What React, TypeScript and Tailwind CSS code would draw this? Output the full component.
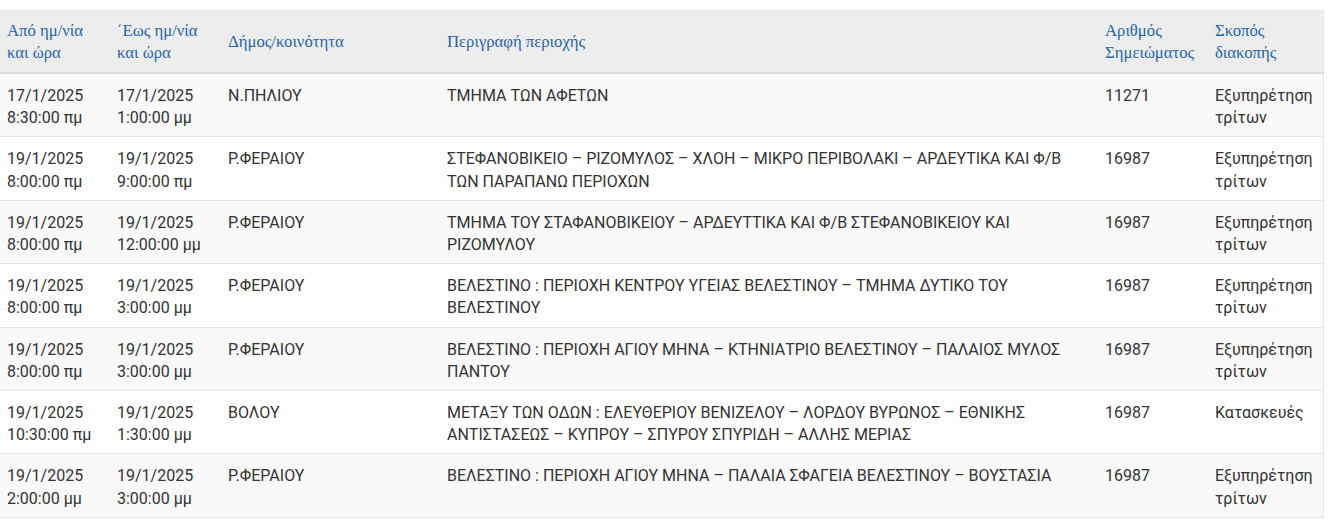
import React from "react";

type Row = [string, string, string, string, string, string, string, string];

const rows: Row[] = [
  ["17/1/2025", "8:30:00 πμ", "17/1/2025", "1:00:00 μμ", "Ν.ΠΗΛΙΟΥ", "ΤΜΗΜΑ ΤΩΝ ΑΦΕΤΩΝ", "11271", "Εξυπηρέτηση τρίτων"],
  ["19/1/2025", "8:00:00 πμ", "19/1/2025", "9:00:00 πμ", "Ρ.ΦΕΡΑΙΟΥ", "ΣΤΕΦΑΝΟΒΙΚΕΙΟ – ΡΙΖΟΜΥΛΟΣ – ΧΛΟΗ – ΜΙΚΡΟ ΠΕΡΙΒΟΛΑΚΙ – ΑΡΔΕΥΤΙΚΑ ΚΑΙ Φ/Β ΤΩΝ ΠΑΡΑΠΑΝΩ ΠΕΡΙΟΧΩΝ", "16987", "Εξυπηρέτηση τρίτων"],
  ["19/1/2025", "8:00:00 πμ", "19/1/2025", "12:00:00 μμ", "Ρ.ΦΕΡΑΙΟΥ", "ΤΜΗΜΑ ΤΟΥ ΣΤΑΦΑΝΟΒΙΚΕΙΟΥ – ΑΡΔΕΥΤΤΙΚΑ ΚΑΙ Φ/Β ΣΤΕΦΑΝΟΒΙΚΕΙΟΥ ΚΑΙ ΡΙΖΟΜΥΛΟΥ", "16987", "Εξυπηρέτηση τρίτων"],
  ["19/1/2025", "8:00:00 πμ", "19/1/2025", "3:00:00 μμ", "Ρ.ΦΕΡΑΙΟΥ", "ΒΕΛΕΣΤΙΝΟ : ΠΕΡΙΟΧΗ ΚΕΝΤΡΟΥ ΥΓΕΙΑΣ ΒΕΛΕΣΤΙΝΟΥ – ΤΜΗΜΑ ΔΥΤΙΚΟ ΤΟΥ ΒΕΛΕΣΤΙΝΟΥ", "16987", "Εξυπηρέτηση τρίτων"],
  ["19/1/2025", "8:00:00 πμ", "19/1/2025", "3:00:00 μμ", "Ρ.ΦΕΡΑΙΟΥ", "ΒΕΛΕΣΤΙΝΟ : ΠΕΡΙΟΧΗ ΑΓΙΟΥ ΜΗΝΑ – ΚΤΗΝΙΑΤΡΙΟ ΒΕΛΕΣΤΙΝΟΥ – ΠΑΛΑΙΟΣ ΜΥΛΟΣ ΠΑΝΤΟΥ", "16987", "Εξυπηρέτηση τρίτων"],
  ["19/1/2025", "10:30:00 πμ", "19/1/2025", "1:30:00 μμ", "ΒΟΛΟΥ", "ΜΕΤΑΞΥ ΤΩΝ ΟΔΩΝ : ΕΛΕΥΘΕΡΙΟΥ ΒΕΝΙΖΕΛΟΥ – ΛΟΡΔΟΥ ΒΥΡΩΝΟΣ – ΕΘΝΙΚΗΣ ΑΝΤΙΣΤΑΣΕΩΣ – ΚΥΠΡΟΥ – ΣΠΥΡΟΥ ΣΠΥΡΙΔΗ – ΑΛΛΗΣ ΜΕΡΙΑΣ", "16987", "Κατασκευές"],
  ["19/1/2025", "2:00:00 μμ", "19/1/2025", "3:00:00 μμ", "Ρ.ΦΕΡΑΙΟΥ", "ΒΕΛΕΣΤΙΝΟ : ΠΕΡΙΟΧΗ ΑΓΙΟΥ ΜΗΝΑ – ΠΑΛΑΙΑ ΣΦΑΓΕΙΑ ΒΕΛΕΣΤΙΝΟΥ – ΒΟΥΣΤΑΣΙΑ", "16987", "Εξυπηρέτηση τρίτων"],
];

const th = "px-[7px] pt-[10px] pb-[8px] text-left align-middle font-normal";
const td = "px-[7px] pt-[11px] pb-[7px] align-top";

export default function App() {
  return (
    <div className="bg-white w-[1340px] h-[531px] pt-[10px] overflow-hidden">
      <table className="table-fixed border-collapse w-[1323px] border-r border-r-[#e6e6e6]">
        <colgroup>
          <col className="w-[110px]" />
          <col className="w-[111px]" />
          <col className="w-[219px]" />
          <col className="w-[658px]" />
          <col className="w-[110px]" />
          <col className="w-[115px]" />
        </colgroup>
        <thead>
          <tr className="bg-[#ededed] border-b-2 border-b-[#dcdcdc] text-[#2466ad] text-[16.7px] leading-[22px] font-['Liberation_Serif',serif]">
            <th className={th}>Από ημ/νία<br />και ώρα</th>
            <th className={th}>΄Εως ημ/νία<br />και ώρα</th>
            <th className={th}>Δήμος/κοινότητα</th>
            <th className={th}>Περιγραφή περιοχής</th>
            <th className={th}>Αριθμός<br />Σημειώματος</th>
            <th className={th}>Σκοπός<br />διακοπής</th>
          </tr>
        </thead>
        <tbody className="text-[16px] leading-[22.2px] text-[#333333] font-['Roboto',sans-serif]">
          {rows.map((r, i) => (
            <tr key={i} className={`border-b border-b-[#e3e3e3] ${i % 2 === 0 ? "bg-[#f9f9f9]" : "bg-white"}`}>
              <td className={td}>{r[0]}<br />{r[1]}</td>
              <td className={td}>{r[2]}<br />{r[3]}</td>
              <td className={td}>{r[4]}</td>
              <td className={td}>{r[5]}</td>
              <td className={td}>{r[6]}</td>
              <td className={td}>{r[7]}</td>
            </tr>
          ))}
        </tbody>
      </table>
    </div>
  );
}
